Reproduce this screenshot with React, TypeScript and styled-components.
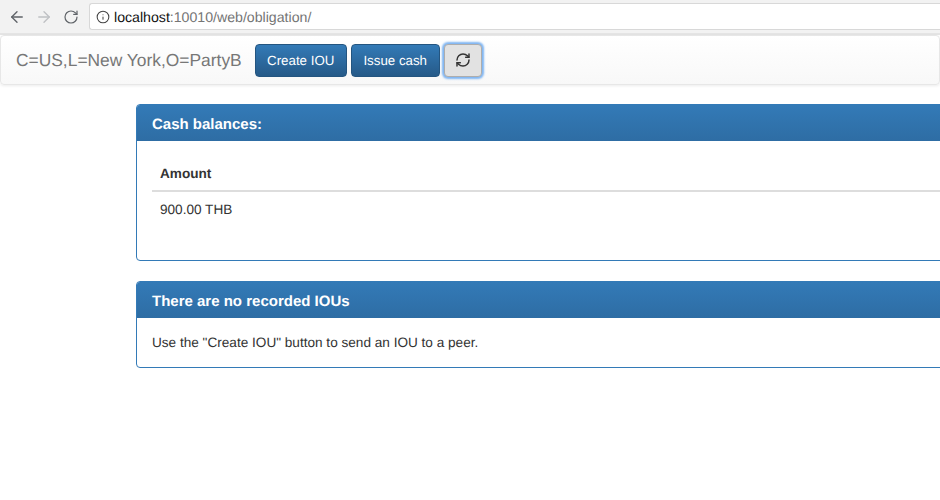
import { ArrowLeft, ArrowRight, Info, RefreshCw, RotateCw } from 'lucide-react'

import styled, { createGlobalStyle } from 'styled-components'

const GlobalStyle = createGlobalStyle`
  html, body {
    margin: 0;
    padding: 0;
    width: 940px;
    height: 500px;
    overflow: hidden;
    background: #fff;
    font-family: 'Liberation Sans', Arial, sans-serif;
    color: #333;
    text-rendering: geometricPrecision;
  }
`

export default function App() {
  return (
    <>
      <GlobalStyle />
      <BrowserBar>
        <NavIcon $color="#5f6368">
          <ArrowLeft size={18} strokeWidth={1.8} />
        </NavIcon>
        <NavIcon $color="#bfc1c4">
          <ArrowRight size={18} strokeWidth={1.8} />
        </NavIcon>
        <NavIcon $color="#5f6368">
          <RotateCw size={16} strokeWidth={1.8} />
        </NavIcon>
        <AddressField>
          <Info size={14} color="#444" strokeWidth={1.8} />
          <Url>
            <b>localhost</b>:10010/web/obligation/
          </Url>
        </AddressField>
      </BrowserBar>
      <Navbar>
        <Brand>C=US,L=New York,O=PartyB</Brand>
        <PrimaryButton>Create IOU</PrimaryButton>
        <PrimaryButton>Issue cash</PrimaryButton>
        <RefreshButton aria-label="Refresh">
          <RefreshCw size={16} strokeWidth={2.2} />
        </RefreshButton>
      </Navbar>
      <Content>
        <Panel>
          <PanelHeading>Cash balances:</PanelHeading>
          <PanelBody $top={16} $bottom={33}>
            <Table>
              <thead>
                <tr>
                  <Th>Amount</Th>
                </tr>
              </thead>
              <tbody>
                <tr>
                  <Td>900.00 THB</Td>
                </tr>
              </tbody>
            </Table>
          </PanelBody>
        </Panel>
        <Panel>
          <PanelHeading>There are no recorded IOUs</PanelHeading>
          <PanelBody $top={15} $bottom={14}>
            Use the "Create IOU" button to send an IOU to a peer.
          </PanelBody>
        </Panel>
      </Content>
    </>
  )
}

const BrowserBar = styled.div`
  height: 33px;
  background: #f2f2f2;
  border-bottom: 2px solid #e4e4e4;
  display: flex;
  align-items: center;
  padding-left: 3px;
`

const NavIcon = styled.span<{ $color: string }>`
  width: 27px;
  height: 24px;
  display: flex;
  align-items: center;
  justify-content: center;
  color: ${({ $color }) => $color};
`

const AddressField = styled.div`
  margin-left: 5px;
  flex: 1;
  height: 25px;
  background: #fff;
  border: 1px solid #d8d8d8;
  border-right: none;
  border-radius: 3px 0 0 3px;
  display: flex;
  align-items: center;
  padding-left: 6px;
  gap: 4px;
`

const Url = styled.span`
  font-size: 14.15px;
  color: #757575;

  b {
    font-weight: 400;
    color: #111;
  }
`

const Navbar = styled.div`
  height: 48px;
  background: linear-gradient(to bottom, #fff, #f8f8f8);
  border: 1px solid #e7e7e7;
  border-radius: 4px;
  box-shadow: 0 1px 3px rgba(0, 0, 0, 0.08);
  display: flex;
  align-items: center;
  padding-left: 15px;
`

const Brand = styled.span`
  font-size: 17.4px;
  color: #777;
  margin-right: 13px;
`

const PrimaryButton = styled.button`
  width: ${92}px;
  height: 33px;
  padding: 0;
  margin-right: 4px;
  font: 13.3px 'Liberation Sans', Arial, sans-serif;
  text-rendering: geometricPrecision;
  color: #fff;
  background: linear-gradient(to bottom, #337ab7, #265a88);
  border: 1px solid #245580;
  border-radius: 4px;

  & + & {
    width: 89px;
  }
`

const RefreshButton = styled.button`
  width: 38px;
  height: 33px;
  display: flex;
  align-items: center;
  justify-content: center;
  padding: 0;
  color: #333;
  background: #e2e2e2;
  border: 1px solid #adadad;
  border-radius: 4px;
  box-shadow: 0 0 2px 2px #7fb5f2;
`

const Content = styled.div`
  width: 1000px;
  margin: 19px 0 0 136px;
  display: flex;
  flex-direction: column;
  gap: 20px;
`

const Panel = styled.section`
  background: #fff;
  border: 1px solid #337ab7;
  border-radius: 4px;
  overflow: hidden;
  font-size: 13.6px;
`

const PanelHeading = styled.h3`
  margin: 0;
  padding: 11px 15px 0;
  height: 36px;
  box-sizing: border-box;
  font-size: 15px;
  font-weight: 700;
  line-height: 17.6px;
  color: #fff;
  background: linear-gradient(to bottom, #337ab7, #2e6da4);
`

const PanelBody = styled.div<{ $top: number; $bottom: number }>`
  padding: ${({ $top }) => $top}px 15px ${({ $bottom }) => $bottom}px;
  line-height: 20px;
  color: #333;
`

const Table = styled.table`
  width: 100%;
  border-collapse: collapse;
`

const Th = styled.th`
  padding: 7px 8px 6px;
  text-align: left;
  border-bottom: 2px solid #ddd;
`

const Td = styled.td`
  padding: 8px 8px 7px;
`
